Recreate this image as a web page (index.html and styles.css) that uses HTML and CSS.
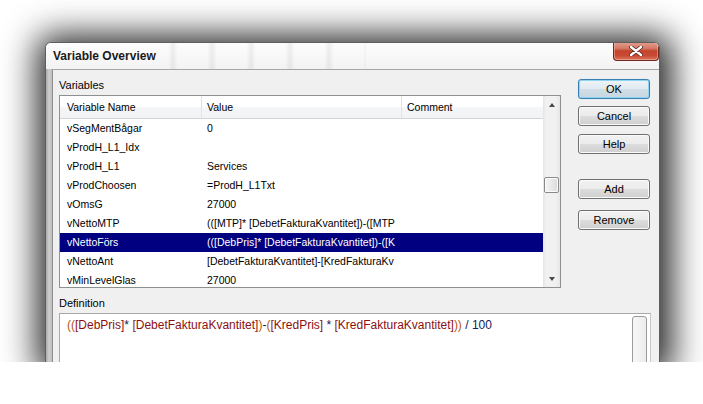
FILE: index.html
```html
<!DOCTYPE html>
<html>
<head>
<meta charset="utf-8">
<title>Variable Overview</title>
<link rel="stylesheet" href="styles.css">
</head>
<body>
<div class="window">
  <div class="titlebar">
    <div class="title">Variable Overview</div>
    <div class="close">
      <svg width="14" height="10" viewBox="0 0 14 10">
        <path d="M2 1 L12 9 M12 1 L2 9" stroke="#5a2a22" stroke-width="4" stroke-linecap="round"/>
        <path d="M2 1 L12 9 M12 1 L2 9" stroke="#ffffff" stroke-width="2.4" stroke-linecap="round"/>
      </svg>
    </div>
  </div>
  <div class="framebody">
    <div class="client">
      <div class="top">
        <div class="vars">
          <div class="label">Variables</div>
          <div class="listbox">
            <div class="list">
              <div class="hdr">
                <div class="c1">Variable Name</div>
                <div class="c2">Value</div>
                <div class="c3">Comment</div>
              </div>
              <div class="row"><div class="c1">vSegMentBågar</div><div class="c2">0</div><div class="c3"></div></div>
              <div class="row"><div class="c1">vProdH_L1_Idx</div><div class="c2"></div><div class="c3"></div></div>
              <div class="row"><div class="c1">vProdH_L1</div><div class="c2">Services</div><div class="c3"></div></div>
              <div class="row"><div class="c1">vProdChoosen</div><div class="c2">=ProdH_L1Txt</div><div class="c3"></div></div>
              <div class="row"><div class="c1">vOmsG</div><div class="c2">27000</div><div class="c3"></div></div>
              <div class="row"><div class="c1">vNettoMTP</div><div class="c2">(([MTP]* [DebetFakturaKvantitet])-([MTP</div><div class="c3"></div></div>
              <div class="row sel"><div class="c1">vNettoFörs</div><div class="c2">(([DebPris]* [DebetFakturaKvantitet])-([K</div><div class="c3"></div></div>
              <div class="row"><div class="c1">vNettoAnt</div><div class="c2">[DebetFakturaKvantitet]-[KredFakturaKv</div><div class="c3"></div></div>
              <div class="row"><div class="c1">vMinLevelGlas</div><div class="c2">27000</div><div class="c3"></div></div>
            </div>
            <div class="vscroll">
              <div class="sbtn"><span class="tri-up"></span></div>
              <div class="track"><div class="thumb"></div></div>
              <div class="sbtn"><span class="tri-down"></span></div>
            </div>
          </div>
        </div>
        <div class="buttons">
          <div class="btn default">OK</div>
          <div class="btn cancel">Cancel</div>
          <div class="btn help">Help</div>
          <div class="btn add">Add</div>
          <div class="btn remove">Remove</div>
        </div>
      </div>
      <div class="def">
        <div class="label">Definition</div>
        <div class="defbox">
          <div class="code"><span class="p">((</span><span class="f">[DebPris]</span><span class="o">* </span><span class="f">[DebetFakturaKvantitet]</span><span class="p">)</span><span class="o">-</span><span class="p">(</span><span class="f">[KredPris]</span><span class="o"> * </span><span class="f">[KredFakturaKvantitet]</span><span class="p">))</span><span class="o"> / 100</span></div>
          <div class="dscroll"><div class="dbtn"></div></div>
        </div>
      </div>
    </div>
  </div>
</div>
</body>
</html>
```

FILE: styles.css
```css
html, body {
  margin: 0;
  padding: 0;
  background: #ffffff;
}

body {
  font-family: "Liberation Sans", Arial, sans-serif;
  font-size: 11px;
  color: #000;
  padding-top: 42px;
  padding-left: 45px;
}

.window {
  width: 613px;
  height: 319px;
  border: 1px solid #5e5e5e;
  border-bottom: none;
  border-radius: 6px 6px 0 0;
  overflow: hidden;
  background: #cfcfcf;
  box-shadow: 2px 3px 34px 10px rgba(0, 0, 0, 0.85);
  display: flex;
  flex-direction: column;
}

.titlebar {
  height: 26px;
  flex: none;
  display: flex;
  justify-content: space-between;
  align-items: flex-start;
  background-color: #f9f9f9;
  background-image:
    repeating-linear-gradient(90deg, rgba(255,255,255,0) 0px, rgba(255,255,255,0) 12px, rgba(0,0,0,0.06) 17px, rgba(255,255,255,0) 22px, rgba(255,255,255,0) 39px),
    linear-gradient(#fdfdfd, #f3f3f3);
  background-size: 210px 100%, 100% 100%;
  background-position: 110px 0, 0 0;
  background-repeat: no-repeat;
}

.title {
  font-weight: bold;
  font-size: 12px;
  color: #1a1a1a;
  padding: 6px 0 0 7px;
  line-height: 14px;
  text-shadow: 0 0 4px rgba(255, 255, 255, 0.9);
}

.close {
  width: 44px;
  height: 18px;
  margin-top: -1px;
  border: 1px solid #6b2a22;
  border-top: none;
  border-radius: 0 0 4px 4px;
  background: linear-gradient(#e2a091 0%, #d47a66 35%, #c3422c 50%, #c94a33 75%, #d9745c 100%);
  box-shadow: inset 0 0 0 1px rgba(255, 200, 190, 0.45);
  display: flex;
  align-items: center;
  justify-content: center;
}

.framebody {
  flex: 1;
  display: flex;
  padding-left: 6px;
  background: linear-gradient(90deg, #a9a9a9 0px, #cfcfcf 3px, #bdbdbd 6px);
}

.client {
  flex: 1;
  background: #f0f0f0;
  border-top: 1px solid #a7a7a7;
  border-left: 1px solid #8f8f8f;
  border-right: 1px solid #8f8f8f;
  padding: 0 8px 0 6px;
  display: flex;
  flex-direction: column;
}

.top {
  display: flex;
  gap: 17px;
}

.label {
  line-height: 14px;
  height: 14px;
  color: #000;
}

.vars .label {
  margin-top: 8px;
  margin-bottom: 3px;
}

.listbox {
  width: 500px;
  height: 191px;
  border: 1px solid #8e8f8f;
  background: #ffffff;
  display: flex;
}

.list {
  width: 483px;
  overflow: hidden;
  font-size: 10.5px;
}

.hdr, .row {
  display: flex;
  white-space: nowrap;
}

.hdr {
  height: 22px;
  line-height: 22px;
  border-bottom: 1px solid #d5d5d5;
  background: linear-gradient(#ffffff 0%, #ffffff 45%, #f4f5f7 55%, #f2f3f5 100%);
}

.row {
  height: 19px;
  line-height: 19px;
}

.c1 {
  width: 134px;
  padding-left: 7px;
  overflow: hidden;
  flex: none;
}

.c2 {
  width: 194px;
  padding-left: 5px;
  overflow: hidden;
  flex: none;
}

.c3 {
  flex: 1;
  padding-left: 5px;
  overflow: hidden;
}

.hdr .c2, .hdr .c3 {
  border-left: 1px solid #e2e3e5;
}

.row .c2, .row .c3 {
  border-left: 1px solid transparent;
}

.row.sel {
  background: #000080;
  color: #ffffff;
}

.vscroll {
  width: 17px;
  display: flex;
  flex-direction: column;
  background: linear-gradient(90deg, #e4e4e4 0px, #f1f1f1 3px, #f1f1f1 13px, #e6e6e6 17px);
}

.sbtn {
  height: 17px;
  flex: none;
  display: flex;
  align-items: center;
  justify-content: center;
}

.tri-up {
  width: 0;
  height: 0;
  border-left: 3.5px solid transparent;
  border-right: 3.5px solid transparent;
  border-bottom: 4px solid #4a4a4a;
}

.tri-down {
  width: 0;
  height: 0;
  border-left: 3.5px solid transparent;
  border-right: 3.5px solid transparent;
  border-top: 4px solid #4a4a4a;
}

.track {
  flex: 1;
  padding-top: 64px;
}

.thumb {
  width: 13px;
  height: 14px;
  margin-left: 1px;
  border: 1px solid #8a8a8a;
  border-radius: 2px;
  background: linear-gradient(90deg, #f6f6f6 0%, #e9e9e9 50%, #dadada 100%);
  box-shadow: inset 0 0 0 1px #fbfbfb;
}

.buttons {
  display: flex;
  flex-direction: column;
  padding-top: 9px;
}

.btn {
  width: 70px;
  height: 18px;
  line-height: 18px;
  text-align: center;
  border: 1px solid #707070;
  border-radius: 3px;
  background: linear-gradient(#f2f2f2 0%, #ebebeb 50%, #dddddd 50%, #cfcfcf 100%);
  box-shadow: inset 0 0 0 1px #fafafa;
  color: #000;
}

.btn.default {
  border-color: #3c7fb1;
  background: linear-gradient(#eef4f8 0%, #e1eaf0 50%, #d1dee7 50%, #c7d6e1 100%);
  box-shadow: inset 0 0 0 1px #8fd3f3, 0 0 1px #9fd7f5;
}

.btn.cancel { margin-top: 7px; }
.btn.help { margin-top: 8px; }
.btn.add { margin-top: 25px; }
.btn.remove { margin-top: 11px; }

.def .label {
  margin-top: 8px;
  margin-bottom: 3px;
}

.defbox {
  width: 590px;
  height: 60px;
  border: 1px solid #a9a9a9;
  border-right-color: #c8c8c8;
  background: #ffffff;
  display: flex;
}

.code {
  flex: 1;
  font-size: 12px;
  line-height: 16px;
  padding: 3px 0 0 7px;
  white-space: nowrap;
}

.code .p { color: #b5560f; }
.code .f { color: #8c1010; }
.code .o { color: #10205a; }

.dscroll {
  width: 17px;
  padding-top: 2px;
  margin-right: 1px;
}

.dbtn {
  width: 13px;
  height: 60px;
  border: 1px solid #9a9a9a;
  border-radius: 3px 3px 0 0;
  background: linear-gradient(90deg, #f7f7f7, #ececec);
}
```
